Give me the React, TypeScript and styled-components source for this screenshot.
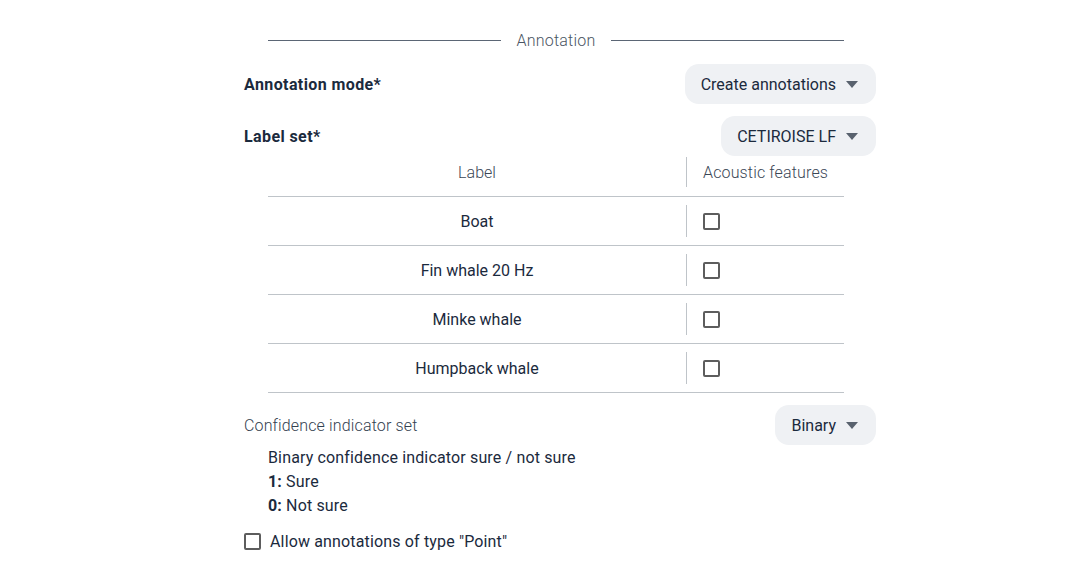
import React from "react";
import styled, { createGlobalStyle } from "styled-components";

const Global = createGlobalStyle`
  html, body { margin: 0; padding: 0; background: #ffffff; }
  body { font-family: Roboto, "Noto Sans", sans-serif; color: #1b2a3d; }
  * { box-sizing: border-box; }
`;

const Page = styled.div`
  width: 1088px;
  padding: 29px 0 0 244px;
`;

const Section = styled.div`
  width: 632px;
  display: flex;
  flex-direction: column;
`;

const Legend = styled.div`
  display: flex;
  align-items: center;
  gap: 16px;
  margin: 0 32px 0 24px;
  height: 22px;
  font-size: 16px;
  font-weight: 300;
  letter-spacing: 0.2px;
  color: #4a5563;
`;

const LegendLine = styled.div`
  flex: 1;
  height: 1px;
  background: #5b6675;
`;

const FieldRow = styled.div<{ $mt: number }>`
  display: flex;
  align-items: center;
  justify-content: space-between;
  margin-top: ${(p) => p.$mt}px;
  height: 40px;
`;

const FieldLabel = styled.span<{ $bold?: boolean }>`
  font-size: 16px;
  font-weight: ${(p) => (p.$bold ? 700 : 300)};
  letter-spacing: ${(p) => (p.$bold ? 0.4 : 0.15)}px;
  color: ${(p) => (p.$bold ? "#1b2a3d" : "#33414f")};
`;

const SelectButton = styled.button`
  display: flex;
  align-items: center;
  gap: 10px;
  height: 40px;
  padding: 0 18px 0 16px;
  border: none;
  border-radius: 14px;
  background: #eff1f4;
  font-family: inherit;
  font-size: 16px;
  color: #1b2a3d;
`;

const Caret = styled.span`
  width: 0;
  height: 0;
  border-left: 6px solid transparent;
  border-right: 6px solid transparent;
  border-top: 7px solid #59626e;
`;

const Table = styled.div`
  margin: 0 32px 0 24px;
  display: flex;
  flex-direction: column;
`;

const TRow = styled.div<{ $h: number; $head?: boolean }>`
  display: grid;
  grid-template-columns: 418px 1fr;
  height: ${(p) => p.$h}px;
  border-bottom: 1px solid #bfc4c9;
  align-items: ${(p) => (p.$head ? "start" : "center")};
  padding-top: ${(p) => (p.$head ? 1 : 0)}px;
`;

const LabelCell = styled.div<{ $head?: boolean }>`
  display: flex;
  align-items: center;
  justify-content: center;
  height: ${(p) => (p.$head ? 30 : 32)}px;
  font-size: 16px;
  font-weight: ${(p) => (p.$head ? 300 : 400)};
  color: ${(p) => (p.$head ? "#3b4756" : "#1b2a3d")};
`;

const SideCell = styled.div<{ $head?: boolean }>`
  display: flex;
  align-items: center;
  height: ${(p) => (p.$head ? 30 : 32)}px;
  padding-left: 16px;
  border-left: 1px solid #bfc4c9;
  font-size: 16px;
  font-weight: 300;
  letter-spacing: 0.15px;
  color: #3b4756;
`;

const Box = styled.span`
  display: inline-block;
  flex-shrink: 0;
  width: 17px;
  height: 17px;
  border: 2px solid #5d5d5d;
  border-radius: 2px;
`;

const Desc = styled.div`
  margin: 0 0 0 24px;
  padding-top: 1px;
  display: flex;
  flex-direction: column;
  font-size: 16px;
  line-height: 24px;
  letter-spacing: 0.15px;
  color: #1b2a3d;
`;

const Strong = styled.b`
  font-weight: 700;
`;

const CheckRow = styled.label`
  display: flex;
  align-items: center;
  gap: 9px;
  margin-top: 11px;
  height: 24px;
  font-size: 16px;
  letter-spacing: 0.15px;
  color: #1b2a3d;
`;

const labels = ["Boat", "Fin whale 20 Hz", "Minke whale", "Humpback whale"];

export default function App() {
  return (
    <>
      <Global />
      <Page>
        <Section>
          <Legend>
            <LegendLine />
            <span>Annotation</span>
            <LegendLine />
          </Legend>
          <FieldRow $mt={13}>
            <FieldLabel $bold>Annotation mode*</FieldLabel>
            <SelectButton>
              Create annotations <Caret />
            </SelectButton>
          </FieldRow>
          <FieldRow $mt={12}>
            <FieldLabel $bold>Label set*</FieldLabel>
            <SelectButton>
              CETIROISE LF <Caret />
            </SelectButton>
          </FieldRow>
          <Table>
            <TRow $h={41} $head>
              <LabelCell $head>Label</LabelCell>
              <SideCell $head>Acoustic features</SideCell>
            </TRow>
            {labels.map((l) => (
              <TRow $h={49} key={l}>
                <LabelCell>{l}</LabelCell>
                <SideCell>
                  <Box />
                </SideCell>
              </TRow>
            ))}
          </Table>
          <FieldRow $mt={12}>
            <FieldLabel>Confidence indicator set</FieldLabel>
            <SelectButton>
              Binary <Caret />
            </SelectButton>
          </FieldRow>
          <Desc>
            <span>Binary confidence indicator sure / not sure</span>
            <span>
              <Strong>1:</Strong> Sure
            </span>
            <span>
              <Strong>0:</Strong> Not sure
            </span>
          </Desc>
          <CheckRow>
            <Box />
            <span>Allow annotations of type "Point"</span>
          </CheckRow>
        </Section>
      </Page>
    </>
  );
}
